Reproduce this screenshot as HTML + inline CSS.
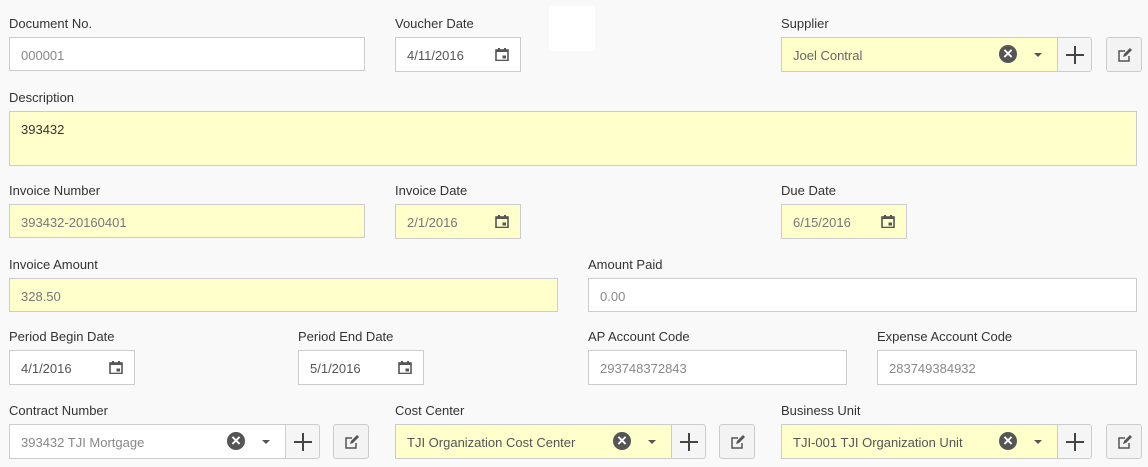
<!DOCTYPE html>
<html><head><style>
body{margin:0;width:1148px;height:467px;background:#f9f9f9;font-family:"Liberation Sans",sans-serif;position:relative;overflow:hidden}
.l{position:absolute;font-size:13px;color:#333;margin-top:1px}
.i{position:absolute;box-sizing:border-box;border:1px solid #ccc;background:#fff;height:35px;font-size:13px;color:#888;padding:10px 0 0 11px}
.y{background:#ffffcc;color:#777}
.d{color:#555}
.cal{position:absolute;right:11px;top:10px;width:14px;height:13px}
.x{position:absolute;width:18px;height:18px;border-radius:50%;background:#555;color:#fff;font-size:17px;line-height:18px;text-align:center;font-weight:bold}
.ar{position:absolute;width:0;height:0;border-left:4px solid transparent;border-right:4px solid transparent;border-top:4px solid #555}
.b{position:absolute;box-sizing:border-box;border:1px solid #ccc;background:#f5f5f5;height:35px;border-radius:0 3px 3px 0}
.e{position:absolute;box-sizing:border-box;border:1px solid #ccc;background:#f3f3f3;height:35px;width:36px;border-radius:3px}
</style></head><body>
<svg width="0" height="0" style="position:absolute"><defs>
<symbol id="c" viewBox="0 0 14 13"><rect x="1" y="2" width="12" height="10.5" fill="none" stroke="#555" stroke-width="1.6"/><rect x="1" y="1.5" width="12" height="2.5" fill="#555"/><rect x="3" y="0" width="2" height="3" fill="#555"/><rect x="9" y="0" width="2" height="3" fill="#555"/><rect x="7.5" y="7.5" width="3.5" height="3" fill="#555"/></symbol>
<symbol id="p" viewBox="0 0 20 20"><path d="M10 1V19M1 10H19" stroke="#444" stroke-width="2"/></symbol>
<symbol id="ed" viewBox="0 0 16 16"><path d="M12 9v5H2V4h6" fill="none" stroke="#555" stroke-width="1.5"/><path d="M6 10l1-3 6-6 2 2-6 6z" fill="#555"/></symbol>
</defs></svg>
<div style="position:absolute;left:549px;top:6px;width:46px;height:45px;background:#fff"></div>

<div class="l" style="left:9px;top:15px">Document No.</div>
<div class="i" style="left:9px;top:37px;width:356px;height:34px">000001</div>
<div class="l" style="left:395px;top:15px">Voucher Date</div>
<div class="i d" style="left:395px;top:37px;width:126px;height:35px">4/11/2016<svg class="cal"><use href="#c"/></svg></div>
<div class="l" style="left:781px;top:15px">Supplier</div>
<div class="i y" style="left:781px;top:37px;width:277px;color:#666">Joel Contral<div class="x" style="left:217px;top:7px">×</div><div class="ar" style="left:252px;top:15px"></div></div>
<div class="b" style="left:1057px;top:37px;width:35px"><svg style="position:absolute;left:7px;top:7px" width="20" height="20"><use href="#p"/></svg></div>
<div class="e" style="left:1106px;top:37px"><svg style="position:absolute;left:10px;top:9px" width="16" height="16"><use href="#ed"/></svg></div>

<div class="l" style="left:9px;top:89px">Description</div>
<div class="i y" style="left:9px;top:111px;width:1128px;height:55px;color:#333;padding-top:10px">393432</div>

<div class="l" style="left:9px;top:182px">Invoice Number</div>
<div class="i y" style="left:9px;top:204px;width:356px;height:34px">393432-20160401</div>
<div class="l" style="left:395px;top:182px">Invoice Date</div>
<div class="i y" style="left:395px;top:204px;width:126px">2/1/2016<svg class="cal"><use href="#c"/></svg></div>
<div class="l" style="left:781px;top:182px">Due Date</div>
<div class="i y" style="left:781px;top:204px;width:126px">6/15/2016<svg class="cal"><use href="#c"/></svg></div>

<div class="l" style="left:9px;top:256px">Invoice Amount</div>
<div class="i y" style="left:9px;top:278px;width:549px;height:34px">328.50</div>
<div class="l" style="left:588px;top:256px">Amount Paid</div>
<div class="i" style="left:588px;top:278px;width:549px;height:34px">0.00</div>

<div class="l" style="left:9px;top:328px">Period Begin Date</div>
<div class="i d" style="left:9px;top:350px;width:126px">4/1/2016<svg class="cal"><use href="#c"/></svg></div>
<div class="l" style="left:298px;top:328px">Period End Date</div>
<div class="i d" style="left:298px;top:350px;width:126px">5/1/2016<svg class="cal"><use href="#c"/></svg></div>
<div class="l" style="left:588px;top:328px">AP Account Code</div>
<div class="i" style="left:588px;top:350px;width:259px">293748372843</div>
<div class="l" style="left:877px;top:328px">Expense Account Code</div>
<div class="i" style="left:877px;top:350px;width:260px">283749384932</div>

<div class="l" style="left:9px;top:402px">Contract Number</div>
<div class="i" style="left:9px;top:424px;width:277px">393432 TJI Mortgage<div class="x" style="left:217px;top:7px">×</div><div class="ar" style="left:252px;top:15px"></div></div>
<div class="b" style="left:285px;top:424px;width:35px"><svg style="position:absolute;left:7px;top:7px" width="20" height="20"><use href="#p"/></svg></div>
<div class="e" style="left:333px;top:424px"><svg style="position:absolute;left:10px;top:9px" width="16" height="16"><use href="#ed"/></svg></div>
<div class="l" style="left:395px;top:402px">Cost Center</div>
<div class="i y" style="left:395px;top:424px;width:277px;color:#555">TJI Organization Cost Center<div class="x" style="left:217px;top:7px">×</div><div class="ar" style="left:252px;top:15px"></div></div>
<div class="b" style="left:671px;top:424px;width:35px"><svg style="position:absolute;left:7px;top:7px" width="20" height="20"><use href="#p"/></svg></div>
<div class="e" style="left:719px;top:424px"><svg style="position:absolute;left:10px;top:9px" width="16" height="16"><use href="#ed"/></svg></div>
<div class="l" style="left:781px;top:402px">Business Unit</div>
<div class="i y" style="left:781px;top:424px;width:277px;color:#555">TJI-001 TJI Organization Unit<div class="x" style="left:217px;top:7px">×</div><div class="ar" style="left:252px;top:15px"></div></div>
<div class="b" style="left:1057px;top:424px;width:35px"><svg style="position:absolute;left:7px;top:7px" width="20" height="20"><use href="#p"/></svg></div>
<div class="e" style="left:1106px;top:424px"><svg style="position:absolute;left:10px;top:9px" width="16" height="16"><use href="#ed"/></svg></div>
</body></html>
